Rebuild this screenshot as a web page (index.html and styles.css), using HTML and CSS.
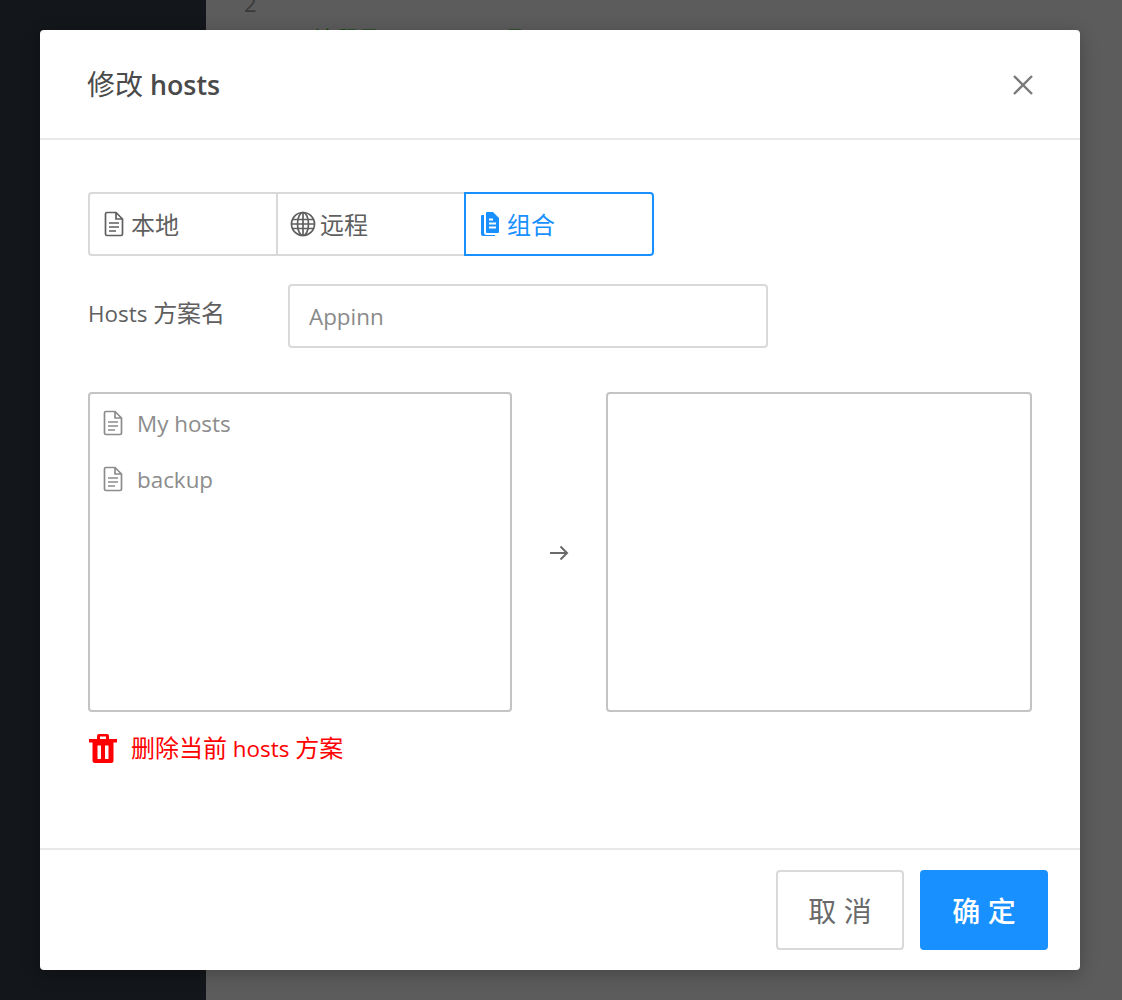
FILE: index.html
```html
<!DOCTYPE html>
<html lang="en">
	<head>
		<meta charset="UTF-8" />
		<title>修改 hosts</title>
		<link rel="stylesheet" href="styles.css">
	</head>
	<body>
		<div class="app">
			<div class="sidebar"></div>
			<div class="main">
				<div class="line-no">2</div>
				<div class="code-line"><span>注释号</span><span class="code-note">项目</span></div>
			</div>
		</div>

		<div class="modal">
			<div class="modal-header">
				<span class="modal-title"><span class="title-cjk">修改</span> hosts</span>
				<svg class="close-icon" viewBox="0 0 22 22">
					<path d="M2 2 L20 20 M20 2 L2 20" />
				</svg>
			</div>

			<div class="modal-body">
				<div class="tabs">
					<div class="tab">
						<svg class="tab-icon" viewBox="0 0 20 26">
							<path class="line" d="M3 1.5 H12 L18.5 8 V23 Q18.5 24.5 17 24.5 H3 Q1.5 24.5 1.5 23 V3 Q1.5 1.5 3 1.5 Z M12 1.5 V8 H18.5 M5 12 H15 M5 16 H15 M5 20 H12" />
						</svg>
						<span class="cjk">本地</span>
					</div>
					<div class="tab">
						<svg class="tab-icon globe" viewBox="0 0 26 26">
							<circle class="line" cx="13" cy="13" r="11.5" />
							<ellipse class="line" cx="13" cy="13" rx="5.5" ry="11.5" />
							<path class="line" d="M13 1.5 V24.5 M2.5 8.5 H23.5 M1.5 13 H24.5 M2.5 17.5 H23.5" />
						</svg>
						<span class="cjk">远程</span>
					</div>
					<div class="tab active">
						<svg class="tab-icon" viewBox="0 0 20 26">
							<path class="solid" d="M7 1 H13 L19 7 V21 Q19 22 18 22 H7 Q6 22 6 21 V2 Q6 1 7 1 Z" />
							<path class="solid" d="M1 5 Q1 4 2 4 H4 V21.5 Q4 24 6.5 24 H15 V25 H3 Q1 25 1 23 Z" />
							<path class="cut" d="M9 8.5 H13 M9 12.5 H16 M9 16.5 H16" />
						</svg>
						<span class="cjk">组合</span>
					</div>
				</div>

				<div class="form-row">
					<label class="form-label">Hosts <span class="cjk">方案名</span></label>
					<input class="form-input" type="text" placeholder="Appinn" />
				</div>

				<div class="transfer">
					<div class="list-box">
						<div class="list-item">
							<svg class="item-icon" viewBox="0 0 20 26">
								<path class="line" d="M3 1.5 H12 L18.5 8 V23 Q18.5 24.5 17 24.5 H3 Q1.5 24.5 1.5 23 V3 Q1.5 1.5 3 1.5 Z M12 1.5 V8 H18.5 M5 12 H15 M5 16 H15 M5 20 H12" />
							</svg>
							<span>My hosts</span>
						</div>
						<div class="list-item">
							<svg class="item-icon" viewBox="0 0 20 26">
								<path class="line" d="M3 1.5 H12 L18.5 8 V23 Q18.5 24.5 17 24.5 H3 Q1.5 24.5 1.5 23 V3 Q1.5 1.5 3 1.5 Z M12 1.5 V8 H18.5 M5 12 H15 M5 16 H15 M5 20 H12" />
							</svg>
							<span>backup</span>
						</div>
					</div>
					<div class="arrow">
						<svg class="arrow-icon" viewBox="0 0 20 18">
							<path d="M1 9 H18 M11.5 2.5 L18 9 L11.5 15.5" />
						</svg>
					</div>
					<div class="list-box"></div>
				</div>

				<div class="delete-row">
					<svg class="trash-icon" viewBox="0 0 28 30">
						<path d="M0 6 H28 V9.5 H0 Z M8 6 V3 Q8 1 10 1 H18 Q20 1 20 3 V6 H17 V3.5 H11 V6 Z" />
						<path fill-rule="evenodd" d="M3.5 9 H24.5 V27.5 Q24.5 30 22 30 H6 Q3.5 30 3.5 27.5 Z M8.5 12.5 V26 H12 V12.5 Z M16 12.5 V26 H19.5 V12.5 Z" />
					</svg>
					<span class="delete-text"><span class="cjk">删除当前</span> hosts <span class="cjk">方案</span></span>
				</div>
			</div>

			<div class="modal-footer">
				<button class="btn">取 消</button>
				<button class="btn btn-primary">确 定</button>
			</div>
		</div>
	</body>
</html>
```

FILE: styles.css
```css
* {
	box-sizing: border-box;
}
body {
	margin: 0;
	font-family: "Open Sans", "Noto Sans CJK SC", sans-serif;
	color: #5f5f5f;
}
.app {
	display: flex;
	height: 1000px;
	overflow: hidden;
}
.sidebar {
	width: 206px;
	background-color: #13161a;
}
.main {
	flex: 1;
	background-color: #5c5c5c;
	padding-left: 38px;
}
.line-no {
	font-size: 22px;
	line-height: 22px;
	margin-top: -8px;
	color: #3a3a3a;
}
.code-line {
	display: flex;
	gap: 120px;
	margin-top: 9px;
	margin-left: 70px;
	font-size: 22px;
	line-height: 30px;
	color: #0a4a0a;
}
.modal {
	position: absolute;
	left: 40px;
	top: 30px;
	width: 1040px;
	height: 940px;
	background-color: #fff;
	border-radius: 4px;
	box-shadow: 0 4px 18px rgba(0, 0, 0, 0.25);
	display: flex;
	flex-direction: column;
}
.modal-header {
	height: 110px;
	padding: 0 47px 2px;
	border-bottom: 2px solid #e8e8e8;
	display: flex;
	align-items: center;
	justify-content: space-between;
}
.modal-title {
	font-size: 26.8px;
	font-weight: 600;
	color: #4a4a4a;
}
.title-cjk {
	font-size: 28px;
	font-weight: 400;
}
.close-icon {
	width: 22px;
	height: 22px;
	margin-top: 4px;
	margin-right: -1px;
}
.close-icon path {
	fill: none;
	stroke: #7a7a7a;
	stroke-width: 2.4;
}
.modal-body {
	flex: 1;
	padding: 52px 48px 0;
}
.cjk {
	font-size: 24px;
}
.tabs {
	display: flex;
	width: 566px;
	height: 64px;
}
.tab {
	flex: 1;
	display: flex;
	align-items: center;
	gap: 8px;
	padding-left: 14px;
	font-size: 22.4px;
	border: 2px solid #d9d9d9;
	margin-left: -2px;
}
.tab:first-child {
	margin-left: 0;
	border-radius: 4px 0 0 4px;
}
.tab:last-child {
	border-radius: 0 4px 4px 0;
}
.tab.active {
	border-color: #1890ff;
	color: #1890ff;
	position: relative;
}
.tab .cjk {
	margin-left: -1px;
	margin-bottom: 2px;
}
.tab-icon {
	width: 20px;
	height: 26px;
}
.tab-icon.globe {
	width: 26px;
	height: 26px;
	margin-left: -2px;
	margin-right: -3px;
}
.line {
	fill: none;
	stroke: currentColor;
	stroke-width: 1.7;
}
.solid {
	fill: currentColor;
}
.cut {
	fill: none;
	stroke: #fff;
	stroke-width: 2;
}
.form-row {
	display: flex;
	margin-top: 28px;
	height: 64px;
}
.form-label {
	width: 200px;
	font-size: 22.4px;
	line-height: 58px;
}
.form-input {
	width: 480px;
	height: 64px;
	padding: 0 19px;
	font-family: inherit;
	font-size: 22.4px;
	border: 2px solid #d9d9d9;
	border-radius: 4px;
	outline: none;
}
.form-input::placeholder {
	color: #8a8a8a;
	opacity: 1;
}
.transfer {
	display: flex;
	align-items: center;
	margin-top: 44px;
}
.list-box {
	height: 320px;
	width: 424px;
	padding-top: 1px;
	border: 2px solid #c4c4c4;
	border-radius: 4px;
	color: #8c8c8c;
}
.list-box:last-child {
	width: 426px;
}
.list-item {
	display: flex;
	align-items: center;
	height: 56px;
	padding-left: 13px;
	gap: 14px;
	font-size: 22.4px;
}
.item-icon {
	width: 20px;
	height: 26px;
}
.arrow {
	width: 94px;
	padding-top: 2px;
	display: flex;
	justify-content: center;
}
.arrow-icon {
	width: 20px;
	height: 18px;
}
.arrow-icon path {
	fill: none;
	stroke: #6a6a6a;
	stroke-width: 2;
}
.delete-row {
	display: flex;
	align-items: center;
	gap: 14px;
	margin-top: 20px;
	height: 32px;
	font-size: 22.4px;
	color: #ff0000;
}
.delete-text {
	margin-bottom: 3px;
}
.trash-icon {
	width: 28px;
	height: 30px;
	margin-left: 1px;
	fill: #ff0000;
}
.modal-footer {
	height: 122px;
	padding: 20px 32px 0;
	border-top: 2px solid #e8e8e8;
	display: flex;
	justify-content: flex-end;
	gap: 16px;
}
.btn {
	width: 128px;
	height: 80px;
	font-family: inherit;
	font-size: 28px;
	color: #6a6a6a;
	background-color: #fff;
	border: 2px solid #d9d9d9;
	border-radius: 4px;
}
.btn-primary {
	color: #fff;
	font-weight: 500;
	background-color: #1890ff;
	border-color: #1890ff;
}
```
